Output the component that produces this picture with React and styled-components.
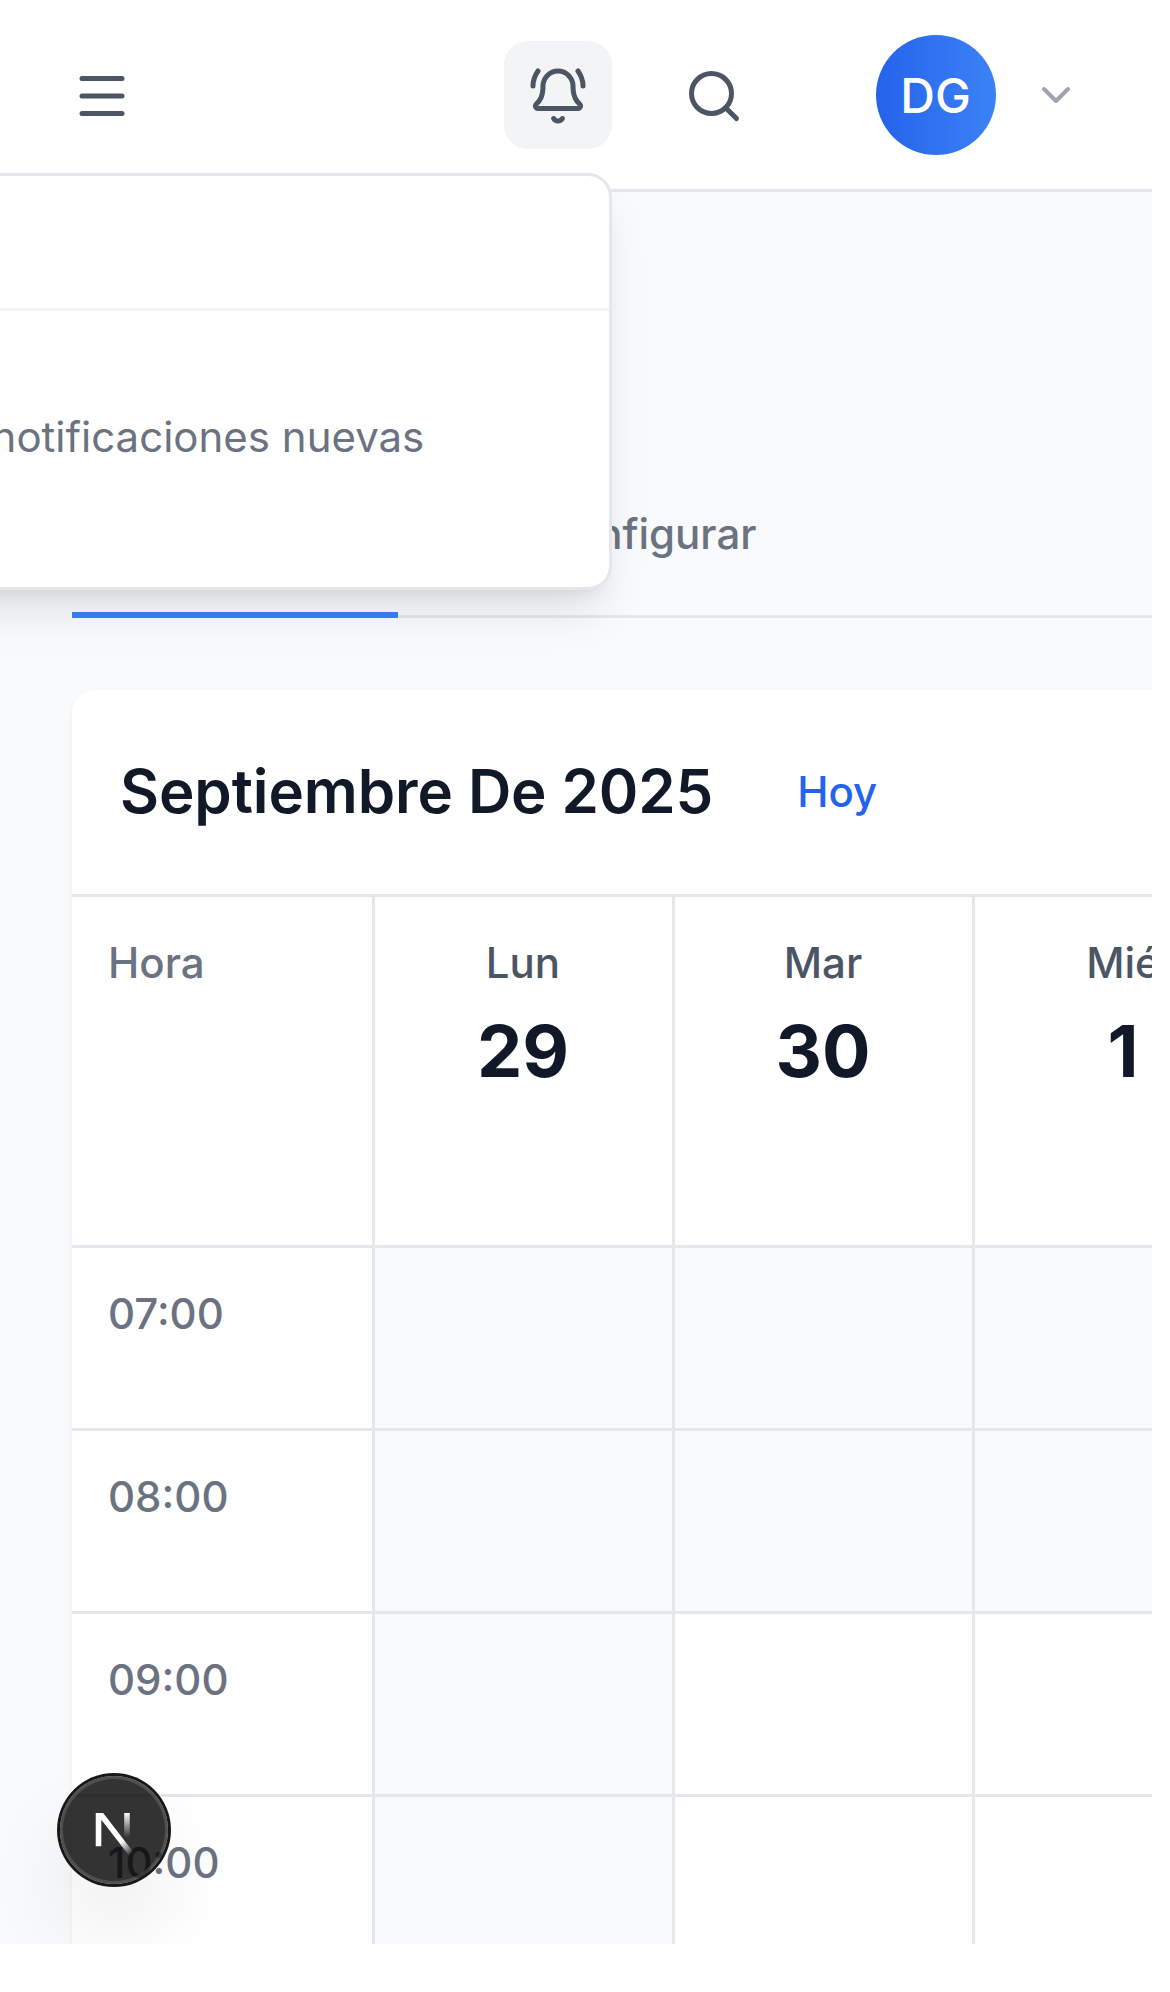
import React from "react";
import styled, { createGlobalStyle } from "styled-components";
import { BellRing, ChevronDown, Menu, Search } from "lucide-react";

const GlobalStyle = createGlobalStyle`
  *, *::before, *::after { box-sizing: border-box; }
  body { margin: 0; background: #fff; }
  button { font: inherit; border: 0; padding: 0; background: none; color: inherit; }
  h2, p { margin: 0; }
`;

const Screen = styled.div`
  position: relative;
  width: 1152px;
  height: 1944px;
  overflow: hidden;
  display: flex;
  flex-direction: column;
  background: #f9fafc;
  color: #111827;
  font-family: Inter, "Liberation Sans", sans-serif;
  font-size: 42px;
  line-height: 60px;
  white-space: nowrap;
`;

const TopBar = styled.header`
  display: flex;
  align-items: center;
  justify-content: space-between;
  flex: none;
  height: 192px;
  padding: 0 72px;
  background: #fff;
  border-bottom: 3px solid #e5e7eb;
`;

const Actions = styled.div`
  display: flex;
  align-items: center;
`;

const IconButton = styled.button`
  display: grid;
  place-items: center;
  width: ${(p) => p.$size || 108}px;
  height: 108px;
  border-radius: 24px;
  color: #4b5563;
  background: ${(p) => (p.$active ? "#f3f4f6" : "transparent")};
  padding-top: ${(p) => p.$nudge || 0}px;
`;

const NotificationAnchor = styled.div`
  position: relative;
  margin-right: 48px;
`;

const Popover = styled.section`
  position: absolute;
  z-index: 2;
  top: 132px;
  right: 0;
  width: 960px;
  height: 417px;
  background: #fff;
  border: 3px solid #e5e7eb;
  border-radius: 24px;
  box-shadow: 0 30px 45px -9px rgba(0, 0, 0, 0.1), 0 12px 18px -12px rgba(0, 0, 0, 0.1);
`;

const PopoverHeader = styled.div`
  height: 135px;
  border-bottom: 3px solid #f3f4f6;
`;

const EmptyMessage = styled.p`
  padding: 96px 48px;
  text-align: center;
  color: #6b7280;
`;

const Account = styled.button`
  display: flex;
  align-items: center;
  gap: 36px;
  margin-left: 108px;
  color: #9ca3af;
`;

const Avatar = styled.span`
  display: grid;
  place-items: center;
  width: 120px;
  height: 120px;
  padding: 2px 1px 0 0;
  border-radius: 50%;
  background: linear-gradient(to right, #2563eb, #3b82f6);
  color: #fff;
  font-size: 48px;
  font-weight: 500;
`;

const Content = styled.main`
  flex: 1;
  padding-left: 72px;
`;

const Tabs = styled.nav`
  display: flex;
  align-items: flex-end;
  gap: 143px;
  height: 426px;
  border-bottom: 3px solid #e5e7eb;
`;

const Tab = styled.button`
  height: 114px;
  min-width: ${(p) => (p.$active ? 326 : 0)}px;
  margin-bottom: -3px;
  padding-bottom: 48px;
  border-bottom: 6px solid ${(p) => (p.$active ? "#3b82f6" : "transparent")};
  color: #6b7280;
  font-weight: 500;
`;

const Calendar = styled.section`
  width: 2400px;
  margin-top: 72px;
  background: #fff;
  border-radius: 24px;
  box-shadow: 0 3px 6px rgba(0, 0, 0, 0.05);
`;

const CalendarHeader = styled.div`
  display: flex;
  align-items: center;
  gap: 84px;
  height: 207px;
  padding-left: 48px;
  border-bottom: 3px solid #e5e7eb;
`;

const Month = styled.h2`
  padding-bottom: 2px;
  font-size: 60px;
  font-weight: 600;
  letter-spacing: -0.09px;
  line-height: 84px;
`;

const TodayButton = styled.button`
  color: #2563eb;
  font-weight: 500;
`;

const Row = styled.div`
  display: grid;
  grid-template-columns: repeat(8, 300px);
  height: ${(p) => (p.$head ? 351 : 183)}px;
  border-bottom: 3px solid #e5e7eb;
`;

const TimeLabel = styled.div`
  padding: 36px;
  color: #6b7280;
  font-weight: 500;
`;

const DayHead = styled.div`
  padding: 36px 37px 36px 36px;
  border-left: 3px solid #e5e7eb;
  text-align: center;
  color: #4b5563;
  font-weight: 500;
`;

const DayNumber = styled.div`
  margin-top: 10px;
  color: #111827;
  font-size: 72px;
  font-weight: 700;
  line-height: 96px;
`;

const Slot = styled.div`
  border-left: 3px solid #e5e7eb;
  background: ${(p) => (p.$closed ? "#f9fafc" : "#fff")};
`;

const DevBadge = styled.div`
  position: absolute;
  z-index: 3;
  left: 60px;
  bottom: 60px;
  width: 108px;
  height: 108px;
  border-radius: 50%;
  background: rgba(0, 0, 0, 0.8);
  box-shadow: 0 0 0 3px #171717, inset 0 0 0 3px rgba(255, 255, 255, 0.14),
    0 48px 96px -24px rgba(0, 0, 0, 0.24);

  svg { display: block; }
`;

const days = [
  { name: "Lun", number: 29, opensAt: 24 },
  { name: "Mar", number: 30, opensAt: 9 },
  { name: "Mié", number: 1, opensAt: 9 },
];

const hours = [7, 8, 9, 10];

function NextMark() {
  return (
    <svg width="108" height="108" viewBox="0 0 36 36" fill="none">
      <defs>
        <linearGradient id="diagonal" x1="9.95555" y1="11.1226" x2="15.4778" y2="17.9671" gradientUnits="userSpaceOnUse">
          <stop stopColor="white" />
          <stop offset="0.604072" stopColor="white" stopOpacity="0" />
          <stop offset="1" stopColor="white" stopOpacity="0" />
        </linearGradient>
        <linearGradient id="stem" x1="11.8222" y1="1.40039" x2="11.792" y2="9.62542" gradientUnits="userSpaceOnUse">
          <stop stopColor="white" />
          <stop offset="1" stopColor="white" stopOpacity="0" />
        </linearGradient>
        <clipPath id="topEdge">
          <rect y="1.5" width="20" height="20" />
        </clipPath>
      </defs>
      <g transform="translate(10.5 10.83)" strokeWidth="1.86">
        <path d="M13.3 15.2 L2.34 1 V12.6" stroke="url(#diagonal)" clipPath="url(#topEdge)" />
        <rect x="10.895" y="1.5" width="1.86" height="11.6" fill="url(#stem)" />
      </g>
    </svg>
  );
}

export default function App() {
  return (
    <>
      <GlobalStyle />
      <Screen>
        <TopBar>
          <IconButton $size={60} $nudge={3} aria-label="Menú">
            <Menu size={60} />
          </IconButton>
          <Actions>
            <NotificationAnchor>
              <IconButton $active $nudge={3}>
                <BellRing size={60} />
              </IconButton>
              <Popover>
                <PopoverHeader />
                <EmptyMessage>No hay notificaciones nuevas</EmptyMessage>
              </Popover>
            </NotificationAnchor>
            <IconButton $nudge={3}>
              <Search size={60} />
            </IconButton>
            <Account>
              <Avatar>DG</Avatar>
              <ChevronDown size={48} />
            </Account>
          </Actions>
        </TopBar>
        <Content>
          <Tabs>
            <Tab $active />
            <Tab>Configurar</Tab>
          </Tabs>
          <Calendar>
            <CalendarHeader>
              <Month>Septiembre De 2025</Month>
              <TodayButton>Hoy</TodayButton>
            </CalendarHeader>
            <Row $head>
              <TimeLabel>Hora</TimeLabel>
              {days.map((day) => (
                <DayHead key={day.name}>
                  {day.name}
                  <DayNumber>{day.number}</DayNumber>
                </DayHead>
              ))}
            </Row>
            {hours.map((hour) => (
              <Row key={hour}>
                <TimeLabel>{String(hour).padStart(2, "0")}:00</TimeLabel>
                {days.map((day) => (
                  <Slot key={day.name} $closed={hour < day.opensAt} />
                ))}
              </Row>
            ))}
          </Calendar>
        </Content>
        <DevBadge>
          <NextMark />
        </DevBadge>
      </Screen>
    </>
  );
}
